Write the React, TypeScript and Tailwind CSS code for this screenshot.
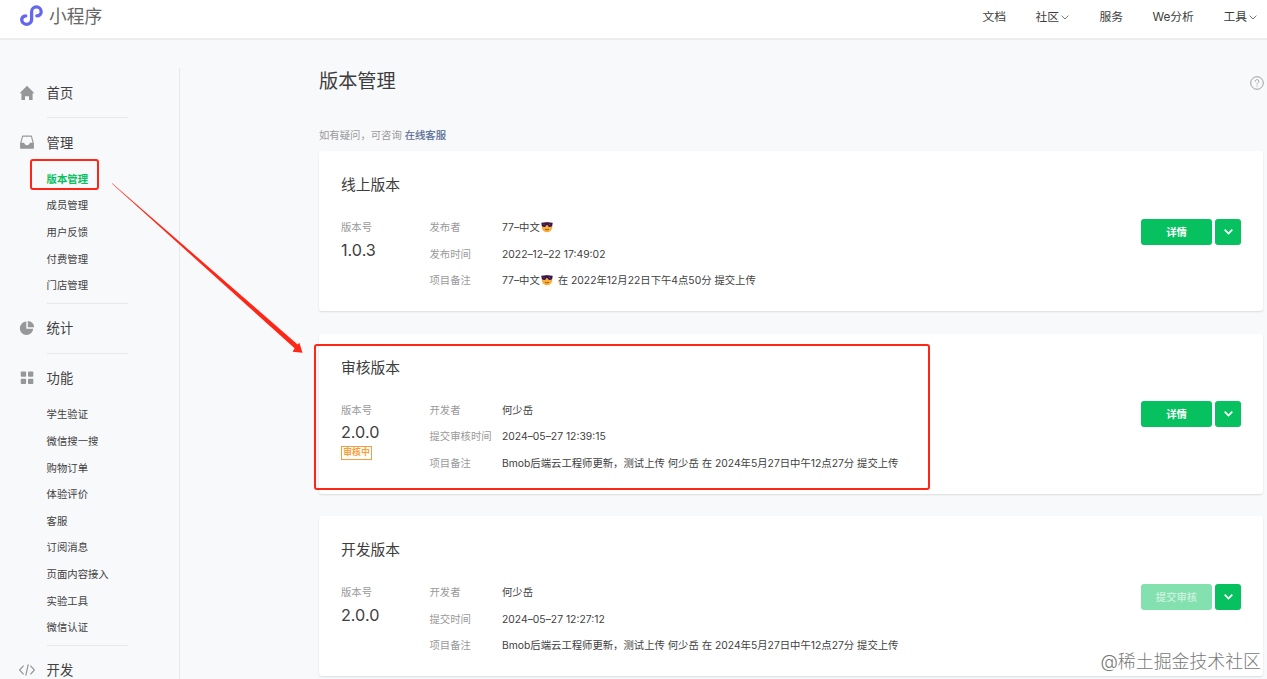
import type { ReactNode } from "react";

type NavSection = {
  title: string;
  icon: ReactNode;
  items?: string[];
};

type VersionCardProps = {
  title: string;
  version: string;
  tag?: string;
  rows: { label: string; value: ReactNode }[];
  action: string;
  disabled?: boolean;
};

const sections: NavSection[] = [
  {
    title: "首页",
    icon: <path d="M8 .8 15.4 8.2H13.6V15H10V11.2H6V15H2.4V8.2H.6Z" fill="#969798" />,
  },
  {
    title: "管理",
    icon: (
      <>
        <path d="M3.6 2.1H12.4L14.2 9V13.9H1.8V9Z" fill="none" stroke="#969798" strokeWidth="1.1" strokeLinejoin="round" />
        <path d="M1.3 8.8H5.2C5.4 12 10.6 12 10.8 8.8H14.7V14.4H1.3Z" fill="#969798" />
      </>
    ),
    items: ["版本管理", "成员管理", "用户反馈", "付费管理", "门店管理"],
  },
  {
    title: "统计",
    icon: (
      <>
        <path d="M7.3 1.6V8.7H14.2A6.7 6.7 0 1 1 7.3 1.6Z" fill="#969798" />
        <path d="M8.8.9A6.4 6.4 0 0 1 15.1 7.2H8.8Z" fill="#969798" />
      </>
    ),
  },
  {
    title: "功能",
    icon: (
      <g fill="#969798">
        <rect x="1.8" y="1.4" width="5.3" height="5.3" rx=".8" />
        <rect x="9" y="1.4" width="5.3" height="5.3" rx=".8" />
        <rect x="1.8" y="8.8" width="5.3" height="5.3" rx=".8" />
        <rect x="9" y="8.8" width="5.3" height="5.3" rx=".8" />
      </g>
    ),
    items: [
      "学生验证",
      "微信搜一搜",
      "购物订单",
      "体验评价",
      "客服",
      "订阅消息",
      "页面内容接入",
      "实验工具",
      "微信认证",
    ],
  },
  {
    title: "开发",
    icon: (
      <path
        d="M4.6 3.6.6 8l4 4.4M11.4 3.6l4 4.4-4 4.4M9.2 2.4 6.8 13.6"
        fill="none"
        stroke="#969798"
        strokeWidth="1.2"
      />
    ),
  },
];

function Chevron({ className }: { className: string }) {
  return (
    <svg viewBox="0 0 8 5" className={className} fill="none" stroke="currentColor">
      <path d="M.6.6 4 4 7.4.6" />
    </svg>
  );
}

function CoolFace() {
  return (
    <svg viewBox="0 0 12 12" className="ml-px inline-block h-[12px] w-[12px] shrink-0">
      <circle cx="6" cy="6" r="5.3" fill="#fbb03a" />
      <path d="M.3 1.8Q6 .8 11.7 1.8L11.3 4.6C10.6 6.6 7.2 6.7 6.6 4H5.4C4.8 6.7 1.4 6.6.7 4.6Z" fill="#35164f" />
      <path d="M2.4 2.9 3.6 4.2M8 2.9 9.2 4.2" stroke="#8d6ca8" strokeWidth=".7" />
      <path d="M4 8.2Q6 9.8 8 8.2" fill="none" stroke="#7a4a16" strokeWidth=".8" />
    </svg>
  );
}

function Header() {
  return (
    <header className="flex h-10 justify-between border-b-2 border-[#ebedef] bg-white pb-[6px] pl-5 pr-[10px]">
      <div className="flex items-center">
        <svg viewBox="0 0 24 22" className="h-[22px] w-6" fill="none" stroke="#6467f0" strokeWidth="3.3" strokeLinecap="round">
          <path d="M16.8 10.8C19.4 10.8 21.2 9.2 21.2 6.7A4.8 4.8 0 0 0 11.6 6.7V15A5 5 0 0 1 1.7 15C1.7 12.5 3.4 11 5.8 10.8" />
        </svg>
        <span className="ml-[5px] pt-px text-[17.7px] leading-none text-[#666]">小程序</span>
      </div>
      <nav className="flex items-center pt-[3px] text-[11.8px] leading-none text-[#3d3d3d]">
        <span className="w-[53px]">文档</span>
        <span className="flex w-[64px] items-center">
          社区
          <Chevron className="ml-[2px] h-[5px] w-[8px] text-[#777]" />
        </span>
        <span className="w-[53px]">服务</span>
        <span className="w-[71px]">We分析</span>
        <span className="flex items-center">
          工具
          <Chevron className="ml-[2px] h-[5px] w-[8px] text-[#777]" />
        </span>
      </nav>
    </header>
  );
}

function Sidebar() {
  return (
    <aside className="mt-7 w-[180px] shrink-0 border-r border-[#e6e8ea] pl-[18.6px] pt-[0.6px]">
      {sections.map((section) => (
        <div key={section.title}>
          <div className="flex h-[48.6px] items-center text-[13.3px] text-[#404040]">
            <svg viewBox="0 0 16 16" className="h-4 w-4">
              {section.icon}
            </svg>
            <span className="ml-[12px] pt-[2px]">{section.title}</span>
          </div>
          {section.items && (
            <ul className="-mt-px pb-[4.4px] pl-[28px] text-[10.35px]">
              {section.items.map((item) => (
                <li
                  key={item}
                  className={
                    item === "版本管理"
                      ? "flex h-[26.6px] items-center pt-px font-bold text-[#07c160]"
                      : "flex h-[26.6px] items-center pt-px text-[#404040]"
                  }
                >
                  {item}
                </li>
              ))}
            </ul>
          )}
          <div className="ml-[28px] h-px w-[81px] bg-[#e6e8ea]" />
        </div>
      ))}
    </aside>
  );
}

function VersionCard({ title, version, tag, rows, action, disabled }: VersionCardProps) {
  return (
    <section className="h-[160px] rounded-[3px] bg-white px-[22px] pt-[22px] shadow-[0_1px_2px_rgba(0,0,0,0.12)]">
      <h2 className="text-[14.75px] leading-6 text-[#3d3d3d]">{title}</h2>
      <div className="mt-[17px] flex text-[10.35px] leading-[26.6px] text-[#404040]">
        <div className="w-[88.5px]">
          <div className="text-[#9a9a9a]">版本号</div>
          <div className="-mt-px text-[16.2px] leading-5">{version}</div>
          {tag && (
            <div className="mt-[4px] flex h-[13.5px] w-[31px] items-center justify-center border border-[#fa9d3b] text-[8.9px] font-bold leading-none text-[#fa9d3b]">
              {tag}
            </div>
          )}
        </div>
        <dl className="grid flex-1 grid-cols-[72.5px_1fr]">
          {rows.map((row) => (
            <div key={row.label} className="contents">
              <dt className="text-[#9a9a9a]">{row.label}</dt>
              <dd className="flex items-center whitespace-pre">{row.value}</dd>
            </div>
          ))}
        </dl>
        <div className="mt-[4.6px] flex h-[26.4px] gap-[3px] text-white">
          <button
            className={
              disabled
                ? "w-[71px] rounded-[3px] bg-[#83e0af] text-[10.35px] font-medium leading-none text-[#cdf3df]"
                : "w-[71px] rounded-[3px] bg-[#07c160] text-[10.35px] font-bold leading-none"
            }
          >
            {action}
          </button>
          <button className="flex w-[26px] items-center justify-center rounded-[3px] bg-[#07c160]">
            <Chevron className="h-[5.6px] w-[9px] stroke-[1.5]" />
          </button>
        </div>
      </div>
    </section>
  );
}

export default function App() {
  return (
    <div className="relative flex h-[679px] w-[1267px] flex-col overflow-hidden bg-[#f8f9fb] font-[Inter,'Noto_Sans_CJK_SC',sans-serif]">
      <Header />
      <div className="flex min-h-0 flex-1">
        <Sidebar />
        <main className="ml-[139px] w-[944px] shrink-0">
          <div className="mt-[25px] flex h-8 items-center justify-between">
            <h1 className="text-[19.2px] leading-8 text-[#3d3d3d]">版本管理</h1>
            <svg viewBox="0 0 14 14" className="mr-[-0.6px] mt-[4px] h-[14px] w-[14px]" fill="none" stroke="#999a9c" strokeWidth=".95">
              <circle cx="7" cy="7" r="6.3" />
              <path d="M5.2 5.6C5.2 3 8.9 3.2 8.8 5.4 8.7 6.7 7 6.8 7 8.3M7 9.5V10.5" />
            </svg>
          </div>
          <p className="mb-[6px] mt-[28px] text-[10.35px] leading-5 text-[#9a9a9a]">
            如有疑问，可咨询 <a className="text-[#576b95] [-webkit-text-stroke:0.2px]">在线客服</a>
          </p>
          <div className="flex flex-col gap-[22.5px]">
            <VersionCard
              title="线上版本"
              version="1.0.3"
              rows={[
                { label: "发布者", value: <>77–中文<CoolFace /></> },
                { label: "发布时间", value: "2022–12–22 17:49:02" },
                { label: "项目备注", value: <>77–中文<CoolFace /><span className="ml-[5px]">在 2022年12月22日下午4点50分 提交上传</span></> },
              ]}
              action="详情"
            />
            <VersionCard
              title="审核版本"
              version="2.0.0"
              tag="审核中"
              rows={[
                { label: "开发者", value: "何少岳" },
                { label: "提交审核时间", value: "2024–05–27 12:39:15" },
                { label: "项目备注", value: "Bmob后端云工程师更新，测试上传 何少岳 在 2024年5月27日中午12点27分 提交上传" },
              ]}
              action="详情"
            />
            <VersionCard
              title="开发版本"
              version="2.0.0"
              rows={[
                { label: "开发者", value: "何少岳" },
                { label: "提交时间", value: "2024–05–27 12:27:12" },
                { label: "项目备注", value: "Bmob后端云工程师更新，测试上传 何少岳 在 2024年5月27日中午12点27分 提交上传" },
              ]}
              action="提交审核"
              disabled
            />
          </div>
        </main>
      </div>

      {/* Annotations */}
      <div className="absolute left-[30px] top-[159px] h-[31px] w-[69px] rounded-[3px] border-2 border-[#fe2617]" />
      <div className="absolute left-[314px] top-[344px] h-[146px] w-[616px] rounded-[3px] border-2 border-[#fe2617]" />
      <svg viewBox="0 0 200 180" className="absolute left-[110px] top-[180px] h-[180px] w-[200px]">
        <path d="M1.8 3.6 2.2 3.2 187.6 164.4 189.4 162.8 192.5 172.8 182.6 171.8 184.6 168.2Z" fill="#fe2617" />
      </svg>

      <div className="absolute right-[6px] top-[650px] whitespace-nowrap text-[17.9px] font-light leading-6 text-[#777] [text-shadow:-1px_-1px_0_#fff,1px_1px_0_#fff]">
        @稀土掘金技术社区
      </div>
    </div>
  );
}
